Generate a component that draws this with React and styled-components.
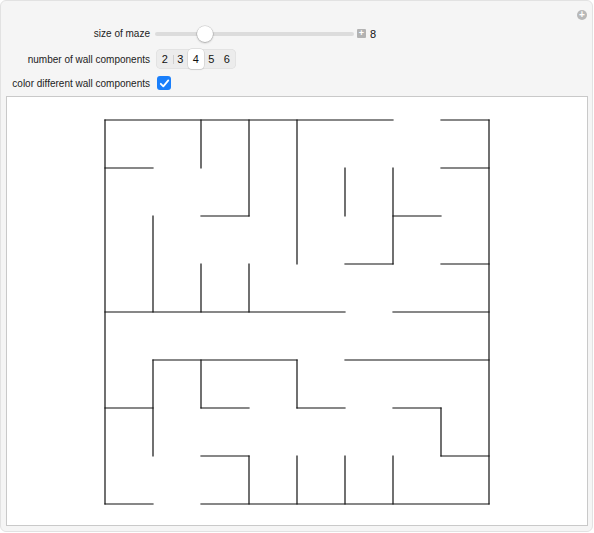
import React, { useState } from 'react';
import styled, { createGlobalStyle } from 'styled-components';

const GlobalStyle = createGlobalStyle`
  html, body {
    margin: 0;
    padding: 0;
    background: #ffffff;
  }
  body {
    font-family: "Liberation Sans", Arial, sans-serif;
  }
`;

const Panel = styled.div`
  position: relative;
  box-sizing: border-box;
  width: 593px;
  height: 532px;
  background: #f5f5f5;
  border: 1px solid #e2e2e2;
  border-radius: 6px;
  padding: 23px 5px 0 4px;
`;

const CornerButton = styled.div`
  position: absolute;
  top: 9px;
  right: 5px;
  width: 10px;
  height: 10px;
  border-radius: 50%;
  background: #b8b8b8;
  display: flex;
  align-items: center;
  justify-content: center;
  color: #fff;
  font-size: 10px;
  font-weight: bold;
  line-height: 10px;
`;

const Controls = styled.div`
  display: grid;
  grid-template-columns: 145px 1fr;
  grid-template-rows: 19px 22px 16px;
  column-gap: 5px;
  row-gap: 5px;
  align-items: center;
`;

const Label = styled.div`
  font-size: 10px;
  color: #222;
  text-align: right;
  white-space: nowrap;
`;

const SliderRow = styled.div`
  display: flex;
  align-items: center;
`;

const Track = styled.div`
  position: relative;
  width: 199px;
  height: 4px;
  border-radius: 2px;
  background: #dcdcdc;
`;

const Thumb = styled.div`
  position: absolute;
  top: -6px;
  left: ${(p) => p.$pos}px;
  width: 16px;
  height: 16px;
  box-sizing: border-box;
  border-radius: 50%;
  background: #fff;
  box-shadow: 0 0 0 0.5px rgba(0, 0, 0, 0.18), 0 1px 2px rgba(0, 0, 0, 0.25);
`;

const PlusBox = styled.div`
  width: 9px;
  height: 9px;
  margin-left: 3px;
  background: #b3b3b3;
  border-radius: 1px;
  color: #fff;
  font-size: 9px;
  font-weight: bold;
  line-height: 9px;
  text-align: center;
`;

const Value = styled.span`
  font-size: 11px;
  color: #111;
  margin-left: 4px;
`;

const Segmented = styled.div`
  display: inline-flex;
  align-items: center;
  align-self: center;
  justify-self: start;
  margin-left: 1px;
  height: 20px;
  padding: 0 1px;
  background: #ececec;
  border-radius: 5px;
  box-shadow: inset 0 0 0 0.5px #dadada;
`;

const Segment = styled.button`
  position: relative;
  width: 15.5px;
  height: ${(p) => (p.$active ? '20px' : '18px')};
  padding: 0;
  border: none;
  font-family: "Liberation Sans", Arial, sans-serif;
  font-size: 11px;
  color: #111;
  background: ${(p) => (p.$active ? '#ffffff' : 'transparent')};
  border-radius: ${(p) => (p.$active ? '4px' : '0')};
  box-shadow: ${(p) => (p.$active ? '0 0 0 0.5px #c9c9c9, 0 1px 1px rgba(0,0,0,0.15)' : 'none')};
  cursor: pointer;

  & + &::before {
    content: '';
    position: absolute;
    left: 0;
    top: 5px;
    height: 9px;
    width: 1px;
    background: ${(p) => (p.$hideDivider ? 'transparent' : '#cfcfcf')};
  }
`;

const Checkbox = styled.div`
  width: 14px;
  height: 14px;
  margin-left: 2px;
  border-radius: 3px;
  background: #1a7ffb;
  display: flex;
  align-items: center;
  justify-content: center;
`;

const Output = styled.div`
  box-sizing: border-box;
  width: 582px;
  height: 430px;
  margin-top: 5px;
  margin-left: 1px;
  padding-top: 2px;
  background: #ffffff;
  border: 1px solid #c9c9c9;
  display: flex;
  align-items: center;
  justify-content: center;
`;

const CELL = 48;

// walls in grid units: [line, from, to]
const horizontal = [
  [0, 0, 6], [0, 7, 8],
  [1, 0, 1], [1, 7, 8],
  [2, 2, 3], [2, 6, 7],
  [3, 5, 6], [3, 7, 8],
  [4, 0, 5], [4, 6, 8],
  [5, 1, 4], [5, 5, 8],
  [6, 0, 1], [6, 2, 3], [6, 4, 5], [6, 6, 7],
  [7, 2, 3], [7, 7, 8],
  [8, 0, 1], [8, 2, 8],
];

const vertical = [
  [0, 0, 8],
  [1, 2, 4], [1, 5, 7],
  [2, 0, 1], [2, 3, 4], [2, 5, 6],
  [3, 0, 2], [3, 3, 4], [3, 7, 8],
  [4, 0, 3], [4, 5, 6], [4, 7, 8],
  [5, 1, 2], [5, 7, 8],
  [6, 1, 3], [6, 7, 8],
  [7, 6, 7],
  [8, 0, 8],
];

function Maze() {
  const o = 1;
  return (
    <svg width={386} height={386} viewBox="0 0 386 386">
      <g stroke="#111" strokeWidth="1.2" strokeLinecap="square" fill="none">
        {horizontal.map(([y, a, b], i) => (
          <line key={'h' + i} x1={o + a * CELL} y1={o + y * CELL} x2={o + b * CELL} y2={o + y * CELL} />
        ))}
        {vertical.map(([x, a, b], i) => (
          <line key={'v' + i} x1={o + x * CELL} y1={o + a * CELL} x2={o + x * CELL} y2={o + b * CELL} />
        ))}
      </g>
    </svg>
  );
}

export default function App() {
  const [count, setCount] = useState(4);
  const options = [2, 3, 4, 5, 6];

  return (
    <>
      <GlobalStyle />
      <Panel>
        <CornerButton>+</CornerButton>
        <Controls>
          <Label>size of maze</Label>
          <SliderRow>
            <Track>
              <Thumb $pos={42} />
            </Track>
            <PlusBox>+</PlusBox>
            <Value>8</Value>
          </SliderRow>

          <Label>number of wall components</Label>
          <Segmented>
            {options.map((n, i) => (
              <Segment
                key={n}
                $active={n === count}
                $hideDivider={n === count || options[i - 1] === count}
                onClick={() => setCount(n)}
              >
                {n}
              </Segment>
            ))}
          </Segmented>

          <Label>color different wall components</Label>
          <Checkbox>
            <svg width="11" height="11" viewBox="0 0 11 11">
              <path d="M1.8 5.8 L4.3 8.3 L9.3 2.4" stroke="#fff" strokeWidth="1.8" fill="none" strokeLinecap="round" strokeLinejoin="round" />
            </svg>
          </Checkbox>
        </Controls>
        <Output>
          <Maze />
        </Output>
      </Panel>
    </>
  );
}
